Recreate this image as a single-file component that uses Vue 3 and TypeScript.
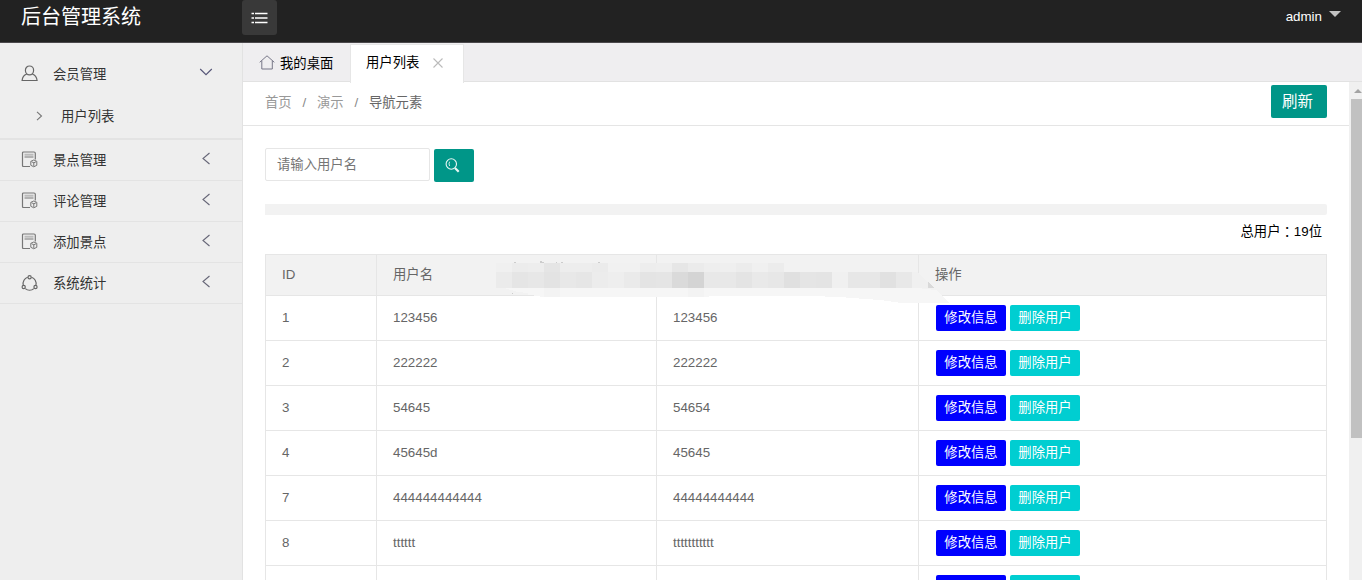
<script setup lang="ts">
interface MenuItem { label: string; icon: 'doc' | 'ring' }
interface User { id: string; name: string; value: string }
interface Block { x: number; y: number; w: number; h: number; c: string }

const menu: MenuItem[] = [
  { label: '景点管理', icon: 'doc' },
  { label: '评论管理', icon: 'doc' },
  { label: '添加景点', icon: 'doc' },
  { label: '系统统计', icon: 'ring' },
]

const users: User[] = [
  { id: '1', name: '123456', value: '123456' },
  { id: '2', name: '222222', value: '222222' },
  { id: '3', name: '54645', value: '54654' },
  { id: '4', name: '45645d', value: '45645' },
  { id: '7', name: '444444444444', value: '44444444444' },
  { id: '8', name: 'tttttt', value: 'ttttttttttt' },
  { id: '', name: '', value: '' },
]

// Mosaic cells that cover the header of the third column, in strips of 16px cells
const strip = (x: number, y: number, h: number, colors: string[]): Block[] =>
  colors.map((c, i) => ({ x: x + i * 16, y, w: 16, h, c }))

const blocks: Block[] = [
  ...strip(0, 9, 9, ['#f0f0f0', '#ececec', '#ededed', '#e5e5e5', '#ededed', '#ededed', '#ebebeb', '#f1f1f1', '#f1f1f1', '#ededed', '#eeeeee', '#e6e6e6', '#ebebeb', '#eeeeee', '#efefef', '#ececec', '#f0f0f0', '#ececec']),
  ...strip(0, 18, 16, ['#ebebeb', '#e5e5e5', '#e7e7e7', '#e3e3e3', '#e8e8e8', '#e6e6e6', '#ececec', '#eeeeee', '#eaeaea', '#e4e4e4', '#e5e5e5', '#dadada', '#d4d4d4', '#e8e8e8', '#e8e8e8', '#e4e4e4', '#e9e9e9', '#e7e7e7', '#e0e0e0', '#e5e5e5', '#e4e4e4', '#f0f0f0', '#e7e7e7', '#e7e7e7', '#e1e1e1', '#e8e8e8']),
]
</script>

<template>
  <div class="app">
    <header class="top">
      <div class="brand">后台管理系统</div>
      <div class="toggle">
        <svg width="17" height="12" viewBox="0 0 17 12" fill="none" stroke="#fff" stroke-width="1.4">
          <path d="M.5 1.500h2.500M4 1.500h12.500M.5 6h2.500M4 6h12.500M.5 10.500h2.500M4 10.500h12.500" />
        </svg>
      </div>
      <div class="account">admin<i class="caret"></i></div>
    </header>

    <div class="body">
      <aside class="side">
        <div class="item first">
          <svg class="ico" width="17" height="17" viewBox="0 0 17 17" fill="none" stroke="#666" stroke-width="1.2">
            <path d="M8.500 1c2.400 0 4.100 1.900 4.100 4.300 0 2.500-1.700 4.500-4.100 4.500S4.400 7.800 4.400 5.300C4.400 2.900 6.100 1 8.500 1zM5.700 9C3 10 1.400 12.200 1.100 15.500h15C15.700 12.200 14.100 10 11.400 9" />
          </svg>
          <span>会员管理</span>
          <svg class="arrow down" width="14" height="8" viewBox="0 0 14 8" fill="none" stroke="#555577" stroke-width="1.1"><path d="M1.200 1L7 6.700 12.800 1" /></svg>
        </div>
        <div class="sub">
          <svg width="7" height="10" viewBox="0 0 7 10" fill="none" stroke="#777" stroke-width="1.1"><path d="M1 .8L5.500 5 1 9.200" /></svg>
          <span>用户列表</span>
        </div>
        <div v-for="m in menu" :key="m.label" class="item">
          <svg v-if="m.icon === 'doc'" class="ico doc" width="17" height="17" viewBox="0 0 17 17" fill="none" stroke="#777" stroke-width="1.2">
            <path d="M9 15.500H2.500Q1.500 15.500 1.500 14.500V2Q1.500 1 2.500 1H13q1.300 0 1.300 1.200V8.500" />
            <path d="M3.500 3.700h9" stroke="#bbb" stroke-width="2" />
            <path d="M3.500 6h9" stroke-width="1" />
            <path d="M9.800 10.300l3-1.300 3 1.300v4l-3 1.500-3-1.500zM12.800 15v-3.500M10.500 10.700l2.300 1.100 2.300-1.100" stroke-width="1" />
          </svg>
          <svg v-else class="ico" width="17" height="17" viewBox="0 0 17 17" fill="none" stroke="#666" stroke-width="1.2">
            <path d="M6.700 2.300A6.500 6.500 0 0 0 2.300 10M4.300 13.600a6.500 6.500 0 0 0 8.600 0M14.900 10a6.500 6.500 0 0 0-4.400-7.700" />
            <circle cx="8.600" cy="2.200" r="1.600" /><circle cx="2.700" cy="12" r="1.600" /><circle cx="14.500" cy="12" r="1.600" />
          </svg>
          <span>{{ m.label }}</span>
          <svg class="arrow left" width="9" height="13" viewBox="0 0 9 13" fill="none" stroke="#666677" stroke-width="1.1"><path d="M8.500 1L2 6.500 8.500 12" /></svg>
        </div>
      </aside>

      <main class="main">
        <nav class="tabs">
          <div class="tab home">
            <svg width="16" height="15" viewBox="0 0 16 15" fill="none" stroke="#777788" stroke-width="1"><path d="M.7 7.300L8 .8l7.300 6.500M2.800 5.800v8.200h10.500V5.800" /></svg>
            <span>我的桌面</span>
          </div>
          <div class="tab active">
            <span>用户列表</span>
            <svg width="10" height="10" viewBox="0 0 10 10" fill="none" stroke="#bbb" stroke-width="1.1"><path d="M.5.5l9 9M9.500.5l-9 9" /></svg>
          </div>
        </nav>
        <div class="frame">
          <div class="page">
            <div class="crumbs">
              <span>首页</span><i>/</i><span>演示</span><i>/</i><b>导航元素</b>
              <button class="refresh">刷新</button>
            </div>
            <div class="content">
              <div class="search">
                <input type="text" placeholder="请输入用户名" />
                <button class="find">
                  <svg width="15" height="15" viewBox="0 0 15 15" fill="none" stroke="#e8f6f4"><circle cx="6.300" cy="6" r="5.200" stroke-width="1.100" /><path d="M4.600 3.700q-1.200 2 0 4.300" stroke-width=".9" /><path d="M10 10l3.700 3.700" stroke-width="2.200" /></svg>
                </button>
              </div>
              <div class="bar"></div>
              <div class="total">总用户<span class="colon">：</span>19位</div>
              <div class="tablebox">
                <table>
                  <colgroup><col class="c1" /><col class="c2" /><col class="c3" /><col /></colgroup>
                  <thead><tr><th>ID</th><th>用户名</th><th></th><th>操作</th></tr></thead>
                  <tbody>
                    <tr v-for="(u, i) in users" :key="i">
                      <td>{{ u.id }}</td><td>{{ u.name }}</td><td>{{ u.value }}</td>
                      <td><div class="ops"><button class="op edit">修改信息</button><button class="op del">删除用户</button></div></td>
                    </tr>
                  </tbody>
                </table>
                <svg class="mosaic" width="460" height="50" viewBox="0 0 460 50" shape-rendering="crispEdges">
                  <path d="M8 34H421L440 36 453 49H405L384 46 343 43 315 42H213V43H44V42H38V41H32V39L22 38z" fill="#f6f6f6" />
                  <path d="M400 18h21l16 16H400z" fill="#f0f0f0" />
                  <rect v-for="(b, i) in blocks" :key="i" :x="b.x" :y="b.y" :width="b.w" :height="b.h" :fill="b.c" />
                  <path d="M48 34h16v9H48zM192 34h16v9H192z" fill="#f3f3f3" />
                  <path d="M18 8h2v1h-2zM44 7h2v1h2v1h-4zM60 8h1v1h-1zM65 8h2v1h-2zM102 8h2v1h-2zM16 39h1v1h-1z" fill="#ccc" />
                  <path d="M432 28l6 6h-6z" fill="#d9d9d9" />
                </svg>
              </div>
            </div>
          </div>
          <div class="scroll"><i class="up"></i><div class="thumb"></div></div>
        </div>
      </main>
    </div>
  </div>
</template>

<style>
html, body { overflow: hidden; }
</style>

<style scoped>
* { box-sizing: border-box; }
svg { display: block; flex: none; }
button { border: 0; padding: 0; margin: 0; font: inherit; color: #fff; border-radius: 2px; }
.app { height: 580px; width: 1362px; overflow: hidden; background: #fff; font: 13.333px/20px "Liberation Sans", "Noto Sans CJK SC", sans-serif; color: #000; }
.top { height: 43px; background: #222; border-bottom: 1px solid #4b494c; display: flex; align-items: flex-start; }
.brand { width: 242px; padding: 2px 0 0 21px; color: #fff; font-size: 20px; line-height: 30px; }
.toggle { width: 35px; height: 35px; background: #393939; border-radius: 3px; display: flex; align-items: center; justify-content: center; }
.account { margin-left: auto; padding: 7px 21px 0 0; color: #fff; display: flex; }
.caret { margin: 4px 0 0 6px; border: 6.5px solid transparent; border-top: 6px solid #c2c2c2; border-bottom: 0; height: 6px; margin-left: 7px; }
.body { display: flex; height: 537px; }
.side { width: 243px; background: #eee; border-right: 1px solid #e2e2e2; color: #333; }
.item { height: 41px; border-bottom: 1px solid #e3e3e3; display: flex; align-items: center; padding: 0 29px 0 21px; }
.item span { margin-left: 15px; padding-top: 2px; }
.item.first { height: 53px; border: 0; padding-top: 8px; }
.ico.doc { margin-top: -2px; }
.arrow { margin-left: auto; }
.arrow.left { margin-right: 3px; margin-top: -3px; }
.arrow.down { margin-top: -4px; }
.sub { height: 44px; border-bottom: 2px solid #e3e3e3; display: flex; align-items: center; padding: 0 0 3px 36px; }
.sub span { margin-left: 18px; padding-top: 2px; }
.main { width: 1119px; }
.tabs { height: 39px; background: #efeef0; border-bottom: 1px solid #e2e2e2; display: flex; }
.tab { display: flex; align-items: center; }
.home { width: 107px; padding: 0 0 0 16px; }
.home span { margin-left: 5px; padding-top: 3px; }
.active { width: 114px; height: 39px; margin-top: 1px; background: #fff; border: 1px solid #e6e6e6; border-bottom: 0; padding: 0 0 2px 15px; }
.active svg { margin: 0 0 0 13.500px; }
.frame { display: flex; height: 498px; overflow: hidden; }
.page { width: 1106px; }
.crumbs { height: 44px; border-bottom: 1px solid #e5e5e5; padding: 0 22px 2px; display: flex; align-items: center; color: #999; }
.crumbs i { width: 25.3px; text-align: center; font-style: normal; color: #888; }
.crumbs b { font-weight: 400; color: #666; }
.refresh { width: 56px; height: 33px; margin-left: auto; padding: 1px 3px 0 0; background: #009688; font-size: 15.5px; margin-top: -3px; }
.content { padding: 22px 22px 0; }
.search { display: flex; height: 34px; }
.search input { width: 165px; height: 33px; border: 1px solid #e6e6e6; border-radius: 2px; padding: 0 11px; font: inherit; color: #757575; }
.search input::placeholder { color: #757575; opacity: 1; }
.find { width: 40px; height: 33px; margin: 1px 0 0 4px; background: #009688; display: flex; align-items: center; justify-content: center; padding-right: 3px; }
.bar { height: 11px; margin-top: 22px; background: #f2f2f2; border-radius: 0 2px 2px 0; }
.total { height: 39px; padding: 7px 5px 0 0; text-align: right; }
.colon { font-family: "Noto Sans CJK TC", sans-serif; line-height: 1; position: relative; top: 1px; }
.tablebox { position: relative; }
table { width: 1062px; table-layout: fixed; border-collapse: collapse; color: #666; }
.c1 { width: 111px; } .c2 { width: 280px; } .c3 { width: 262px; }
th, td { height: 45px; border: 1px solid #e6e6e6; padding: 0 16px; text-align: left; font-weight: 400; }
th { height: 41px; background: #f2f2f2; padding-bottom: 1px; }
.ops { display: flex; gap: 4px; padding: 0 0 0 1px; }
td:not(:last-child) { padding-bottom: 1px; }
.op { width: 70px; height: 26px; }
.edit { background: #00f; }
.del { background: #00ced1; }
.mosaic { position: absolute; left: 231px; top: 0; }
.scroll { width: 13px; background: #f0f0f0; padding: 7px 0 0 2px; }
.up { display: block; margin: 0 0 6px 3px; width: 8px; border: 4px solid transparent; border-bottom-color: #a3a3a3; border-top: 0; }
.thumb { height: 339px; background: #c1c1c1; }
</style>
